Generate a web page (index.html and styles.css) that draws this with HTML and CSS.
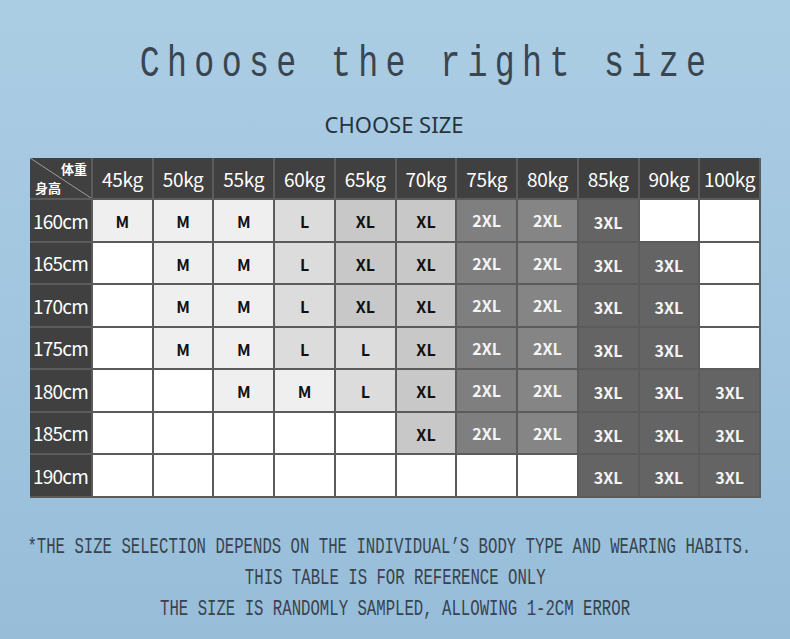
FILE: index.html
```html
<!DOCTYPE html>
<html lang="en">
<head>
<meta charset="utf-8">
<title>Choose the right size</title>
<link rel="stylesheet" href="styles.css">
</head>
<body>
<main class="page">
  <h1 class="title"><span class="squeeze">Choose the right size</span></h1>
  <h2 class="subtitle">CHOOSE SIZE</h2>
  <div class="chart">
    <div class="corner"><span class="c-w">体重</span><span class="c-h">身高</span></div>
    <div class="hd">45kg</div><div class="hd">50kg</div><div class="hd">55kg</div><div class="hd">60kg</div><div class="hd">65kg</div><div class="hd">70kg</div><div class="hd">75kg</div><div class="hd">80kg</div><div class="hd">85kg</div><div class="hd">90kg</div><div class="hd">100kg</div>

    <div class="rh">160cm</div>
    <div class="c m">M</div><div class="c m">M</div><div class="c m">M</div><div class="c l">L</div><div class="c xl">XL</div><div class="c xl">XL</div><div class="c x2 a">2XL</div><div class="c x2">2XL</div><div class="c x3">3XL</div><div class="c"></div><div class="c"></div>

    <div class="rh">165cm</div>
    <div class="c"></div><div class="c m">M</div><div class="c m">M</div><div class="c l">L</div><div class="c xl">XL</div><div class="c xl">XL</div><div class="c x2 a">2XL</div><div class="c x2">2XL</div><div class="c x3">3XL</div><div class="c x3">3XL</div><div class="c"></div>

    <div class="rh">170cm</div>
    <div class="c"></div><div class="c m">M</div><div class="c m">M</div><div class="c l">L</div><div class="c xl">XL</div><div class="c xl">XL</div><div class="c x2 a">2XL</div><div class="c x2">2XL</div><div class="c x3">3XL</div><div class="c x3">3XL</div><div class="c"></div>

    <div class="rh">175cm</div>
    <div class="c"></div><div class="c m">M</div><div class="c m">M</div><div class="c l">L</div><div class="c l">L</div><div class="c xl">XL</div><div class="c x2 a">2XL</div><div class="c x2">2XL</div><div class="c x3">3XL</div><div class="c x3">3XL</div><div class="c"></div>

    <div class="rh">180cm</div>
    <div class="c"></div><div class="c"></div><div class="c m">M</div><div class="c m">M</div><div class="c l">L</div><div class="c xl">XL</div><div class="c x2 a">2XL</div><div class="c x2">2XL</div><div class="c x3">3XL</div><div class="c x3">3XL</div><div class="c x3">3XL</div>

    <div class="rh">185cm</div>
    <div class="c"></div><div class="c"></div><div class="c"></div><div class="c"></div><div class="c"></div><div class="c xl">XL</div><div class="c x2 a">2XL</div><div class="c x2">2XL</div><div class="c x3">3XL</div><div class="c x3">3XL</div><div class="c x3">3XL</div>

    <div class="rh">190cm</div>
    <div class="c"></div><div class="c"></div><div class="c"></div><div class="c"></div><div class="c"></div><div class="c"></div><div class="c"></div><div class="c"></div><div class="c x3">3XL</div><div class="c x3">3XL</div><div class="c x3">3XL</div>
  </div>
  <div class="notes">
    <p class="note note-first"><span class="squeeze-s">*THE SIZE SELECTION DEPENDS ON THE INDIVIDUAL’S BODY TYPE AND WEARING HABITS.</span></p>
    <p class="note"><span class="squeeze-s">THIS TABLE IS FOR REFERENCE ONLY</span></p>
    <p class="note"><span class="squeeze-s">THE SIZE IS RANDOMLY SAMPLED, ALLOWING 1-2CM ERROR</span></p>
  </div>
</main>
</body>
</html>
```

FILE: styles.css
```css
html, body {
  margin: 0;
  padding: 0;
}
body {
  width: 790px;
  height: 639px;
  overflow: hidden;
  background: linear-gradient(180deg, #abcde4 0%, #a2c6df 50%, #97bdd9 100%);
}
.page {
  display: flex;
  flex-direction: column;
  align-items: center;
  padding-top: 39px;
}
.title {
  margin: 0;
  height: 49px;
  display: flex;
  justify-content: center;
  width: 100%;
  font-weight: normal;
}
.squeeze {
  display: inline-block;
  white-space: nowrap;
  font-family: "Liberation Mono", monospace;
  font-size: 45px;
  line-height: 52px;
  letter-spacing: 9.9px;
  color: #3a4550;
  transform: scaleX(0.74);
  transform-origin: center;
  margin-left: 62px;
}
.subtitle {
  margin: 21px 0 0 0;
  font-family: "Noto Sans", sans-serif;
  font-weight: normal;
  font-size: 22px;
  line-height: 30px;
  color: #28333d;
  padding-right: 2px;
}
.chart {
  margin-top: 19px;
  margin-left: 1px;
  width: 731px;
  box-sizing: border-box;
  display: grid;
  grid-template-columns: 61px repeat(11, 1fr);
  grid-template-rows: 40px repeat(7, 40.5px);
  gap: 2px;
  padding: 0 2px 2px 0;
  background: #5b5b5b;
  font-family: "Noto Sans CJK SC", "Noto Sans", sans-serif;
}
.corner {
  position: relative;
  background-color: #404040;
  background-image: linear-gradient(to top right, #404040 calc(50% - 0.8px), #a0a0a0 50%, #404040 calc(50% + 0.8px));
  color: #fff;
  font-size: 13px;
  font-weight: bold;
  line-height: 1;
}
.c-w {
  position: absolute;
  right: 4px;
  top: 4px;
}
.c-h {
  position: absolute;
  left: 5px;
  bottom: 4px;
}
.hd {
  background: #404040;
  color: #fff;
  font-size: 19px;
  display: flex;
  align-items: center;
  justify-content: center;
  letter-spacing: -0.3px;
}
.rh {
  background: #404040;
  color: #fff;
  font-size: 19px;
  display: flex;
  align-items: center;
  justify-content: flex-end;
  padding-right: 3px;
  letter-spacing: -0.8px;
}
.c {
  background: #ffffff;
  display: flex;
  align-items: center;
  justify-content: center;
  font-size: 16px;
  font-weight: bold;
  color: #111;
  padding-top: 2px;
}
.c.m { background: #efefef; }
.c.l { background: #dcdcdc; }
.c.xl { background: #c8c8c8; }
.c.x2 { background: #858585; color: #f4f4f4; padding-top: 0; }
.c.x2.a { background: #7f7f7f; }
.c.x3 { background: #646464; color: #f4f4f4; padding-top: 4px; }
.notes {
  margin-top: 39px;
  width: 100%;
  display: flex;
  flex-direction: column;
}
.note {
  margin: 0;
  height: 31px;
  display: flex;
  justify-content: center;
  white-space: nowrap;
}
.note-first {
  padding-right: 12px;
}
.squeeze-s {
  display: inline-block;
  font-family: "Liberation Mono", monospace;
  font-size: 22px;
  line-height: 22px;
  color: #38434e;
  transform: scaleX(0.712);
  transform-origin: center;
}
```
